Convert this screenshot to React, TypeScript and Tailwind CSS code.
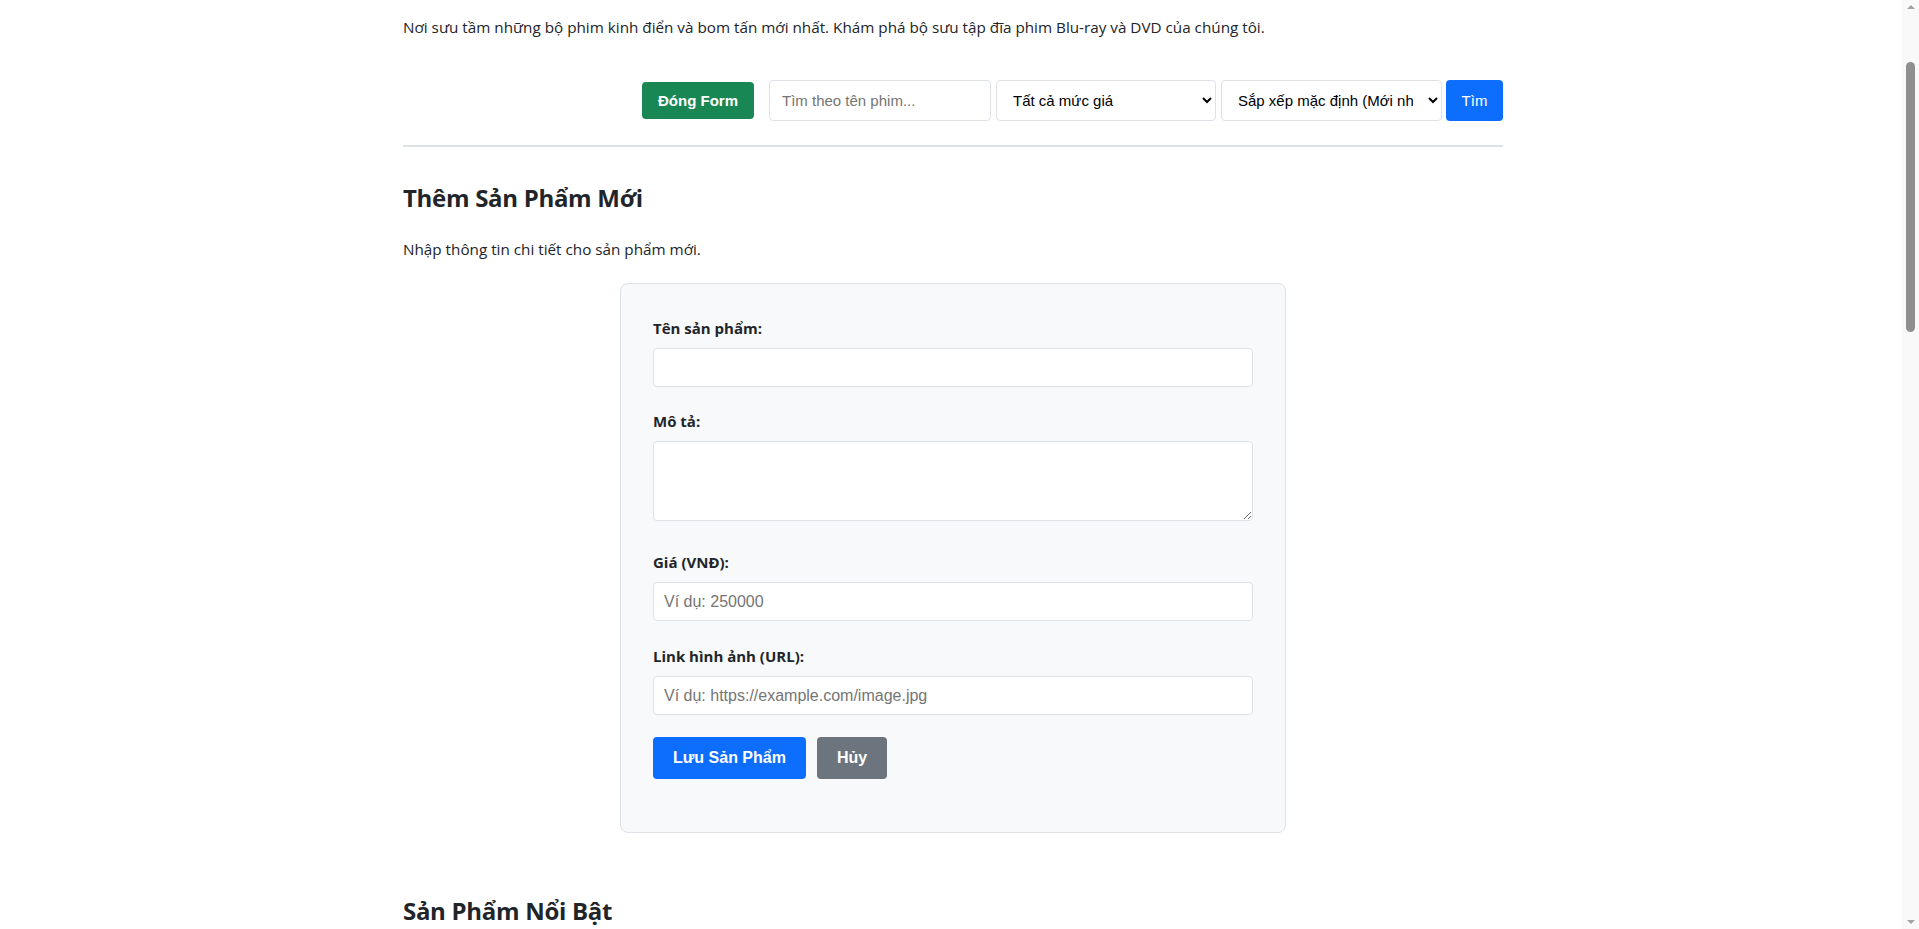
import React, { useState } from "react";

const products = [
  { name: "Inception", price: "250.000 ₫" },
  { name: "The Dark Knight", price: "280.000 ₫" },
  { name: "Interstellar", price: "300.000 ₫" },
  { name: "Avengers: Endgame", price: "350.000 ₫" },
  { name: "Titanic", price: "220.000 ₫" },
  { name: "Parasite", price: "260.000 ₫" },
  { name: "Spirited Away", price: "240.000 ₫" },
  { name: "The Godfather", price: "320.000 ₫" },
  { name: "Dune", price: "330.000 ₫" },
  { name: "Joker", price: "270.000 ₫" },
  { name: "Oppenheimer", price: "380.000 ₫" },
  { name: "La La Land", price: "210.000 ₫" },
];

// fake browser scrollbar, the page in the shot is scrolled a bit
function ScrollBar() {
  return (
    <div aria-hidden className="fixed top-0 right-0 w-[17px] h-screen bg-[#f9f9f9] flex flex-col items-center">
      <div className="mt-[5px] w-0 h-0 border-l-[4px] border-r-[4px] border-b-[4px] border-l-transparent border-r-transparent border-b-[#a3a3a3]" />
      <div className="mt-[53px] w-[9px] h-[270px] rounded-full bg-[#8f8f8f]" />
      <div className="flex-1" />
      <div className="mb-[5px] w-0 h-0 border-l-[4px] border-r-[4px] border-t-[4px] border-l-transparent border-r-transparent border-t-[#a3a3a3]" />
    </div>
  );
}

export default function App() {
  const [showForm, setShowForm] = useState(true);

  return (
    <div className="min-h-screen bg-white text-[#212529] font-['Open_Sans','Noto_Sans',sans-serif] text-[16px] leading-6 pl-[4px] pr-[17px]">
      <div className="w-[1100px] mx-auto pt-[15px] pb-10">
        {/* Intro */}
        <p className="text-[15.25px]">
          Nơi sưu tầm những bộ phim kinh điển và bom tấn mới nhất. Khám phá bộ sưu tập đĩa phim Blu-ray và DVD của chúng tôi.
        </p>

        {/* Toolbar */}
        <div className="mt-[41px] flex items-center justify-end font-['Liberation_Sans',Arial,sans-serif] text-[15px]">
          <button
            onClick={() => setShowForm(!showForm)}
            className="h-[37px] px-[16px] mr-[15px] rounded bg-[#198754] text-white font-bold"
          >
            {showForm ? "Đóng Form" : "Thêm Sản Phẩm"}
          </button>
          <input
            type="text"
            placeholder="Tìm theo tên phim..."
            className="w-[222px] h-[41px] px-3 border border-[#dee2e6] rounded bg-white placeholder:text-[#757575] outline-none"
          />
          <select className="ml-[5px] w-[220px] h-[41px] pl-[12px] pr-3 border border-[#dee2e6] rounded bg-white text-black">
            <option>Tất cả mức giá</option>
            <option>Dưới 200.000 ₫</option>
            <option>200.000 ₫ - 300.000 ₫</option>
            <option>Trên 300.000 ₫</option>
          </select>
          <select className="ml-[5px] w-[221px] h-[41px] pl-[12px] pr-3 border border-[#dee2e6] rounded bg-white text-black">
            <option>Sắp xếp mặc định (Mới nhất)</option>
            <option>Giá tăng dần</option>
            <option>Giá giảm dần</option>
          </select>
          <button className="ml-[4px] h-[41px] w-[57px] rounded bg-[#0d6efd] text-white">Tìm</button>
        </div>

        <hr className="mt-6 border-0 h-[2px] bg-[#dee2e6]" />

        {showForm && (
          <section>
            <h2 className="mt-[35px] text-[24px] leading-[32px] font-bold tracking-[-0.3px]">Thêm Sản Phẩm Mới</h2>
            <p className="mt-[23px] text-[15.25px]">Nhập thông tin chi tiết cho sản phẩm mới.</p>

            <form
              onSubmit={(e) => e.preventDefault()}
              className="mt-[22px] mx-auto w-[666px] px-8 pt-8 pb-[53px] bg-[#f8f9fa] border border-[#dee2e6] rounded-lg"
            >
              <div className="mb-[22px]">
                <label className="block text-[15px] font-bold mb-2">Tên sản phẩm:</label>
                <input
                  type="text"
                  className="block w-full h-[39px] px-[10px] border border-[#dee2e6] rounded bg-white outline-none"
                />
              </div>
              <div className="mb-[29px]">
                <label className="block text-[15px] font-bold mb-2">Mô tả:</label>
                <textarea className="block w-full h-[80px] px-[10px] py-2 border border-[#dee2e6] rounded bg-white outline-none" />
              </div>
              <div className="mb-[23px]">
                <label className="block text-[15px] font-bold mb-2">Giá (VNĐ):</label>
                <input
                  type="number"
                  placeholder="Ví dụ: 250000"
                  className="block w-full h-[39px] px-[10px] border border-[#dee2e6] rounded bg-white font-['Liberation_Sans',Arial,sans-serif] placeholder:text-[#757575] outline-none"
                />
              </div>
              <div className="mb-[22px]">
                <label className="block text-[15px] font-bold mb-2">Link hình ảnh (URL):</label>
                <input
                  type="text"
                  placeholder="Ví dụ: https://example.com/image.jpg"
                  className="block w-full h-[39px] px-[10px] border border-[#dee2e6] rounded bg-white font-['Liberation_Sans',Arial,sans-serif] placeholder:text-[#757575] outline-none"
                />
              </div>
              <div className="flex gap-[11px] font-['Liberation_Sans',Arial,sans-serif] text-[16px] font-bold">
                <button type="submit" className="h-[42px] px-5 rounded bg-[#0d6efd] text-white">
                  Lưu Sản Phẩm
                </button>
                <button type="button" onClick={() => setShowForm(false)} className="h-[42px] px-5 rounded bg-[#6c757d] text-white">
                  Hủy
                </button>
              </div>
            </form>
          </section>
        )}

        {/* Featured products */}
        <h2 className="mt-[62px] text-[24px] leading-[32px] font-bold tracking-[-0.3px]">Sản Phẩm Nổi Bật</h2>
        <div className="mt-6 grid grid-cols-4 gap-6">
          {products.map((p) => (
            <div key={p.name} className="border border-[#dee2e6] rounded-lg overflow-hidden bg-white">
              <div className="h-[400px] bg-[#e9ecef] flex items-center justify-center text-[#6c757d]">{p.name}</div>
              <div className="p-4">
                <h3 className="font-bold text-[17px]">{p.name}</h3>
                <p className="mt-1 text-[#dc3545] font-bold">{p.price}</p>
                <button className="mt-3 h-[38px] px-4 rounded bg-[#0d6efd] text-white text-[15px] font-['Liberation_Sans',Arial,sans-serif]">
                  Thêm vào giỏ
                </button>
              </div>
            </div>
          ))}
        </div>
      </div>
      <footer className="mt-10 py-10 bg-[#212529] text-white text-center text-[15px]">
        © 2024 Cửa hàng phim Blu-ray &amp; DVD
      </footer>
      <ScrollBar />
    </div>
  );
}
